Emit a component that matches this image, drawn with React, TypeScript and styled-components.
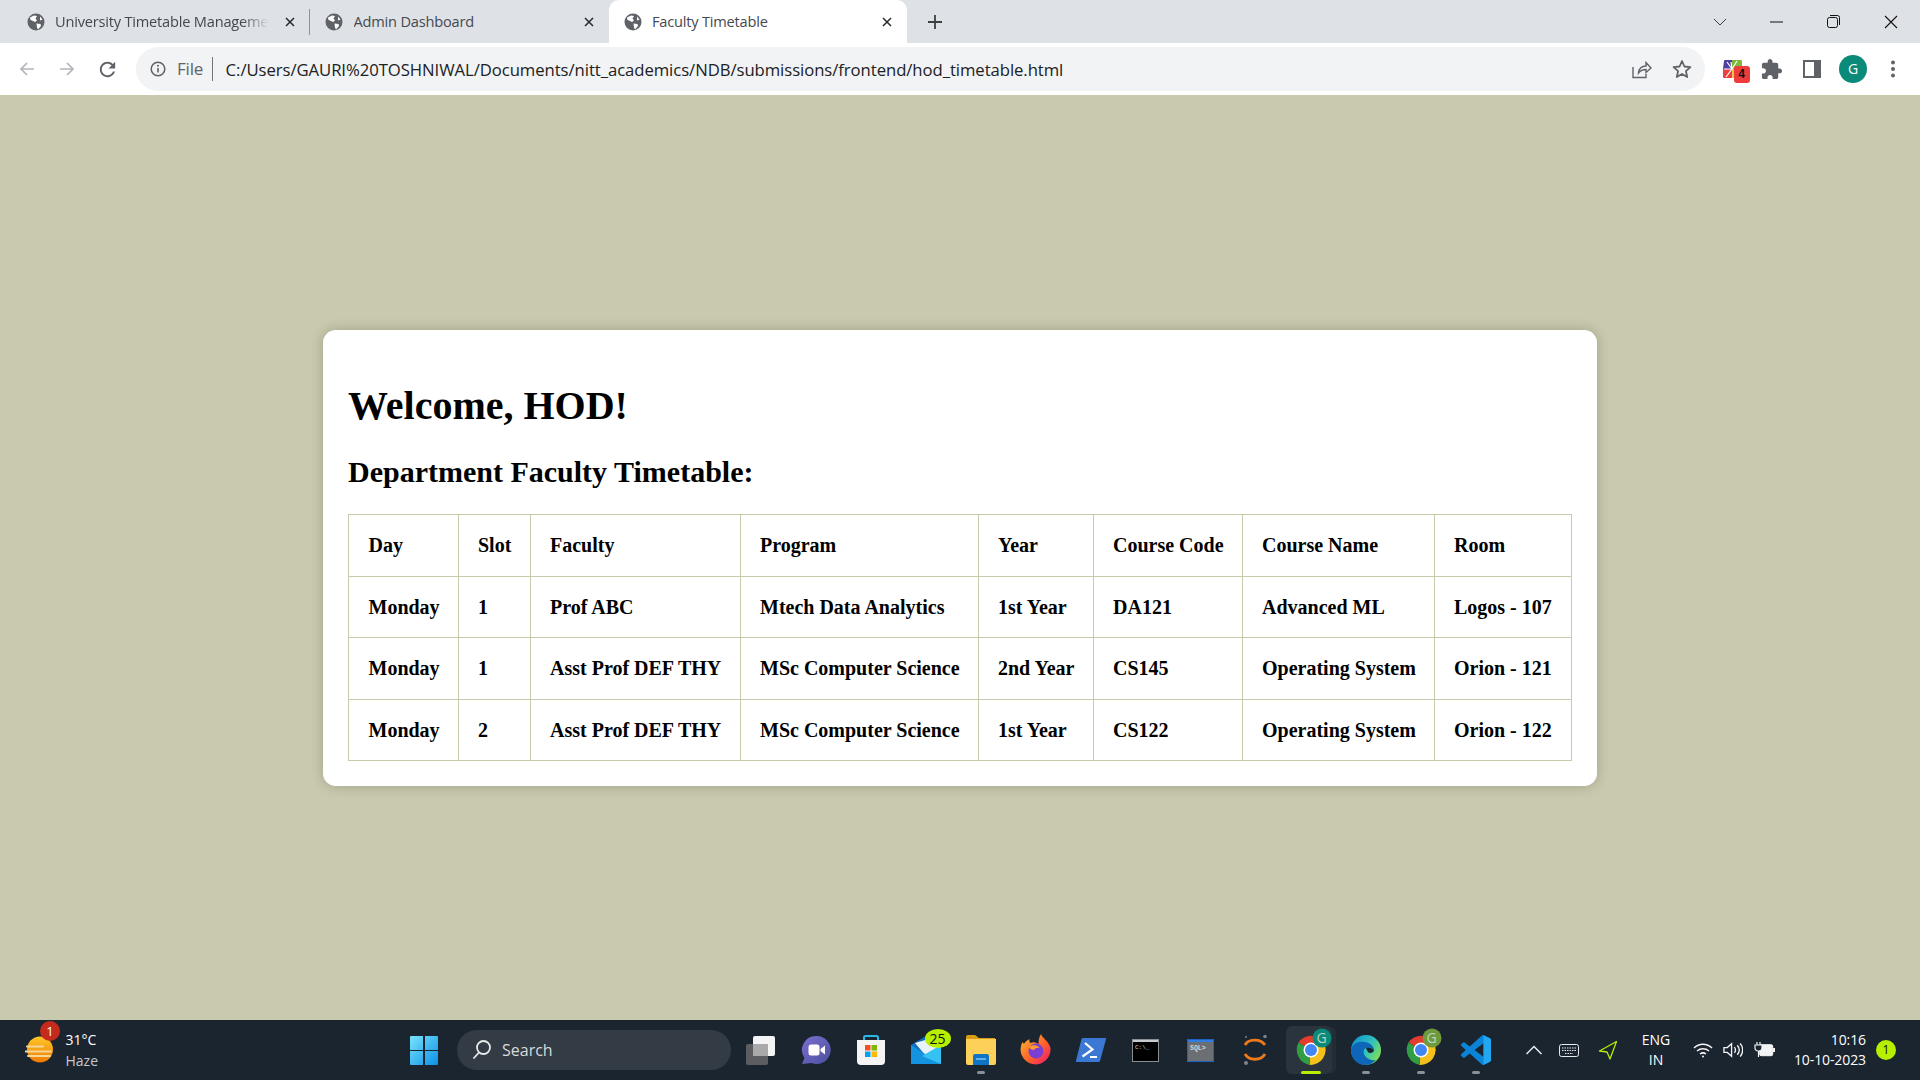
import React from "react";
import styled, { createGlobalStyle } from "styled-components";

const Global = createGlobalStyle`
  html, body { margin: 0; padding: 0; height: 100%; overflow: hidden; }
  #root { height: 100vh; }
`;

const Screen = styled.div`
  height: 1080px;
  width: 1920px;
  display: flex;
  flex-direction: column;
  background: #c9c9ae;
`;

/* ---------- browser chrome ---------- */
const TabStrip = styled.div`
  height: 43px;
  flex: none;
  display: flex;
  align-items: stretch;
  background: #dee1e6;
  padding-left: 11.5px;
  font-family: "Open Sans", "Noto Sans", sans-serif;
`;
const Tab = styled.div<{ $active?: boolean }>`
  width: 298.5px;
  flex: none;
  display: flex;
  align-items: center;
  padding: 0 11px 0 15px;
  box-sizing: border-box;
  position: relative;
  background: ${(p) => (p.$active ? "#fff" : "transparent")};
  border-radius: 10px 10px 0 0;
`;
const TabDivider = styled.div`
  position: absolute;
  right: 0;
  top: 9px;
  bottom: 8px;
  width: 1px;
  background: #8f9398;
`;
const TabTitle = styled.div<{ $fade?: boolean }>`
  margin-left: 10.5px;
  margin-top: -2px;
  flex: 1;
  min-width: 0;
  font-size: 14.6px;
  color: #45494e;
  white-space: nowrap;
  overflow: hidden;
  letter-spacing: -0.2px;
  ${(p) => p.$fade && `-webkit-mask-image: linear-gradient(90deg,#000 84%,transparent 96%);`}
`;
const TabClose = styled.div`
  width: 18px;
  height: 18px;
  margin-left: 3px;
  display: flex;
  align-items: center;
  justify-content: center;
  color: #26282b;
`;
const NewTab = styled.div`
  width: 28px;
  display: flex;
  align-items: center;
  justify-content: center;
  margin-left: 14px;
`;
const WindowControls = styled.div`
  margin-left: auto;
  display: flex;
  align-items: center;
`;
const WinCtl = styled.div<{ $w: number }>`
  width: ${(p) => p.$w}px;
  display: flex;
  justify-content: center;
`;

const Toolbar = styled.div`
  height: 52px;
  flex: none;
  display: flex;
  align-items: center;
  background: #fff;
  padding-left: 7px;
  box-sizing: border-box;
  font-family: "Open Sans", "Noto Sans", sans-serif;
`;
const ToolBtn = styled.div<{ $w?: number; $gap?: number }>`
  width: ${(p) => p.$w ?? 40}px;
  margin-left: ${(p) => p.$gap ?? 0}px;
  flex: none;
  display: flex;
  align-items: center;
  justify-content: center;
  position: relative;
`;
const Omnibox = styled.div`
  width: 1569px;
  height: 44px;
  margin-left: 9px;
  flex: none;
  display: flex;
  align-items: center;
  background: #f1f3f4;
  border-radius: 22px;
  padding-left: 14px;
  box-sizing: border-box;
`;
const FileLabel = styled.span`
  font-size: 17px;
  color: #5f6368;
  margin-left: 11px;
  padding-right: 9px;
  border-right: 1px solid #70757a;
  line-height: 24px;
  letter-spacing: -0.2px;
`;
const Url = styled.span`
  font-size: 16.7px;
  color: #202124;
  margin-left: 12.5px;
  letter-spacing: -0.06px;
  white-space: nowrap;
`;
const OmniActions = styled.div`
  margin-left: auto;
  display: flex;
  margin-right: 3px;
`;
const ExtBadge = styled.div`
  position: absolute;
  left: 21px;
  top: 7px;
  width: 16px;
  height: 17px;
  border-radius: 3px;
  background: #ee3b3b;
  color: #111;
  font: 700 12px/17px "Liberation Sans", sans-serif;
  text-align: center;
`;
const Avatar = styled.div`
  width: 28px;
  height: 28px;
  border-radius: 50%;
  background: #0a8a78;
  color: #fff;
  font-size: 14px;
  line-height: 28px;
  text-align: center;
`;

/* ---------- page ---------- */
const Page = styled.main`
  flex: 1;
  min-height: 0;
  padding-top: 1px;
  display: flex;
  align-items: center;
  justify-content: center;
  font-family: "Liberation Serif", "Times New Roman", serif;
  color: #000;
`;
const Card = styled.section`
  width: 1274px;
  box-sizing: border-box;
  background: #fff;
  padding: 25px;
  border-radius: 12.5px;
  box-shadow: 0 0 12.5px rgba(0, 0, 0, 0.2);
`;
const Heading = styled.h1`
  font-size: 40px;
  line-height: 46px;
  margin: 28.5px 0 26px;
  font-weight: 700;
`;
const SubHeading = styled.h2`
  font-size: 30px;
  line-height: 34px;
  margin: 26px 0 25px;
  font-weight: 700;
`;
const Table = styled.table`
  width: 1223px;
  border-collapse: collapse;
  table-layout: fixed;
`;
const Col = styled.col<{ $w: number }>`
  width: ${(p) => p.$w}px;
`;
const Cell = styled.td`
  border: 1px solid #c9c9ae;
  padding: 18.75px 0 18.75px 19.5px;
  font-size: 20px;
  line-height: 23px;
  font-weight: 700;
  text-align: left;
  white-space: nowrap;
`;

/* ---------- taskbar ---------- */
const Taskbar = styled.footer`
  height: 60px;
  flex: none;
  display: flex;
  align-items: center;
  background: #1b2530;
  color: #fff;
  font-family: "Open Sans", "Noto Sans", sans-serif;
`;
const Weather = styled.div`
  width: 405px;
  flex: none;
  box-sizing: border-box;
  padding-left: 25px;
  display: flex;
  align-items: center;
  position: relative;
`;
const WeatherText = styled.div`
  margin-left: 10.5px;
  font-size: 14px;
  line-height: 21px;
`;
const WeatherHaze = styled.div`
  color: #c5c9cc;
`;
const WeatherBadge = styled.div`
  position: absolute;
  left: 40px;
  top: -8px;
  width: 20px;
  height: 20px;
  border-radius: 50%;
  background: #c42b1c;
  font-size: 13px;
  line-height: 20px;
  text-align: center;
`;
const Start = styled.div`
  width: 38px;
  flex: none;
  display: flex;
  justify-content: center;
`;
const Search = styled.div`
  width: 274px;
  height: 40px;
  margin-left: 14px;
  margin-right: 2px;
  flex: none;
  box-sizing: border-box;
  padding-left: 14px;
  display: flex;
  align-items: center;
  background: #333b44;
  border-radius: 20px;
  font-size: 16px;
  color: #d8dadc;
`;
const SearchLabel = styled.span`
  margin-left: 9px;
`;
const Slot = styled.div<{ $active?: boolean }>`
  width: 55px;
  height: 50px;
  flex: none;
  display: flex;
  align-items: center;
  justify-content: center;
  position: relative;
  ${(p) =>
    p.$active &&
    `&::before{content:"";position:absolute;left:3px;right:6px;top:1px;bottom:1px;border-radius:6px;background:#2b333c;box-shadow:5px 0 0 -1px #242c35;}`}
  & > * { position: relative; }
`;
const Indicator = styled.div<{ $active?: boolean }>`
  position: absolute !important;
  bottom: 1px;
  left: 50%;
  width: ${(p) => (p.$active ? 20 : 8)}px;
  height: 3.5px;
  margin-left: ${(p) => (p.$active ? -10 : -4)}px;
  border-radius: 2px;
  background: ${(p) => (p.$active ? "#b6ef00" : "#8b9096")};
`;
const CountBadge = styled.div`
  position: absolute !important;
  left: 26.5px;
  top: 4px;
  width: 26px;
  height: 19px;
  border-radius: 50%;
  background: #b6ef00;
  color: #111;
  font-size: 14px;
  line-height: 19px;
  text-align: center;
`;
const Tray = styled.div`
  margin-left: 13px;
  display: flex;
  align-items: center;
  height: 100%;
`;
const TrayItem = styled.div<{ $w: number }>`
  width: ${(p) => p.$w}px;
  flex: none;
  display: flex;
  justify-content: center;
`;
const Lang = styled.div`
  width: 54px;
  flex: none;
  text-align: center;
  font-size: 14px;
  line-height: 20px;
`;
const Clock = styled.div`
  width: 81px;
  flex: none;
  text-align: right;
  font-size: 14px;
  line-height: 20px;
  white-space: nowrap;
  letter-spacing: -0.1px;
`;
const NotifBadge = styled.div`
  width: 20px;
  height: 20px;
  margin-left: 10px;
  flex: none;
  border-radius: 50%;
  background: #b6ef00;
  color: #111;
  font-size: 12px;
  line-height: 20px;
  text-align: center;
`;
const BadgeLetter = styled.div`
  position: absolute !important;
  left: 29px;
  top: 3px;
  width: 19px;
  text-align: center;
  font-size: 14px;
  line-height: 20px;
  color: #b9d6c5;
`;

/* ---------- icons ---------- */
const Globe = () => (
  <svg width="18" height="18" viewBox="0 0 18 18">
    <circle cx="9" cy="9" r="8.5" fill="#5f6368" />
    <path d="M3 4.5 7 2.5l3 .5-1.5 2.5L10 7.5 8 9 5 7.5 3.5 7zM9.5 10.5l4 .5.5 2-3 3.5-1-2zM13 3.5l2.5 3-2.5 1z" fill="#fff" />
  </svg>
);
const CloseX = ({ c = "#26282b" }: { c?: string }) => (
  <svg width="12" height="12" viewBox="0 0 12 12">
    <path d="M2 2l8 8M10 2l-8 8" stroke={c} strokeWidth="1.5" />
  </svg>
);
const Plus = () => (
  <svg width="16" height="16" viewBox="0 0 16 16">
    <path d="M8 1v14M1 8h14" stroke="#3c4043" strokeWidth="1.8" />
  </svg>
);
const ArrowSvg = styled.svg<{ $flip?: boolean }>`
  transform: ${(p) => (p.$flip ? "scaleX(-1)" : "none")};
`;
const Arrow = ({ flip }: { flip?: boolean }) => (
  <ArrowSvg $flip={flip} width="18" height="18" viewBox="0 0 18 18">
    <path d="M16 9H3M9 3 3 9l6 6" fill="none" stroke="#b2b5b9" strokeWidth="1.7" />
  </ArrowSvg>
);
const Reload = () => (
  <svg width="23" height="23" viewBox="0 0 24 24">
    <path fill="#5f6368" d="M17.65 6.35C16.2 4.9 14.21 4 12 4c-4.42 0-7.99 3.58-7.99 8s3.57 8 7.99 8c3.73 0 6.84-2.55 7.73-6h-2.08c-.82 2.33-3.04 4-5.65 4-3.31 0-6-2.69-6-6s2.69-6 6-6c1.66 0 3.14.69 4.22 1.78L13 11h7V4l-2.35 2.35z" />
  </svg>
);
const Info = () => (
  <svg width="16" height="16" viewBox="0 0 16 16">
    <circle cx="8" cy="8" r="6.8" fill="none" stroke="#5f6368" strokeWidth="1.5" />
    <path d="M8 7v4.6" stroke="#5f6368" strokeWidth="1.6" />
    <circle cx="8" cy="4.8" r="1" fill="#5f6368" />
  </svg>
);
const Share = () => (
  <svg width="20" height="20" viewBox="0 0 20 20" fill="none" stroke="#5f6368" strokeWidth="1.4">
    <path d="M1 8v10.5h13V15" />
    <path d="M6.5 14c.5-4.5 3.5-7 7.5-7V3.5l5 5.500-5 4.500V10.500c-3 0-5.500 1-7.500 3.500z" />
  </svg>
);
const Star = () => (
  <svg width="20" height="20" viewBox="0 0 20 20">
    <path d="M10 2l2.4 5.500 6 .6-4.500 4 1.300 5.900L10 15l-5.200 3 1.300-5.900-4.500-4 6-.6z" fill="none" stroke="#5f6368" strokeWidth="1.8" strokeLinejoin="round" />
  </svg>
);
const ExtIcon = () => (
  <svg width="20" height="20" viewBox="0 0 20 20">
    <path d="M1 2a1 1 0 0 1 1-1h7v9H0z" fill="#4f3f9e" />
    <path d="M9 1h9a1 1 0 0 1 1 1v8H9z" fill="#7cb83c" />
    <path d="M0 10h9v9H1a1 1 0 0 1-1-1z" fill="#ee4040" />
    <path d="M9 10h10v8a1 1 0 0 1-1 1H9z" fill="#f4c150" />
    <path d="M9 10l5-8M9 10 3 18M9 10 4 3M9 10l-1-7M9 10H1" stroke="#fff" strokeWidth="1.2" />
  </svg>
);
const Puzzle = () => (
  <svg width="23" height="23" viewBox="0 0 24 24">
    <path fill="#5f6368" d="M20.5 11H19V7c0-1.1-.9-2-2-2h-4V3.5C13 2.12 11.88 1 10.5 1S8 2.12 8 3.5V5H4c-1.1 0-1.99.9-1.99 2v3.8H3.5c1.49 0 2.7 1.21 2.7 2.7s-1.21 2.7-2.7 2.7H2V20c0 1.1.9 2 2 2h3.8v-1.5c0-1.49 1.21-2.7 2.7-2.7 1.49 0 2.7 1.21 2.7 2.7V22H17c1.1 0 2-.9 2-2v-4h1.5c1.38 0 2.5-1.12 2.5-2.5S21.88 11 20.5 11z" />
  </svg>
);
const SidePanel = () => (
  <svg width="18" height="18" viewBox="0 0 18 18">
    <path d="M0 0h18v18H0z" fill="#5f6368" />
    <path d="M2 2h9v14H2z" fill="#fff" />
  </svg>
);
const Dots = () => (
  <svg width="6" height="18" viewBox="0 0 6 18">
    <circle cx="3" cy="2.5" r="2" fill="#5f6368" />
    <circle cx="3" cy="9" r="2" fill="#5f6368" />
    <circle cx="3" cy="15.5" r="2" fill="#5f6368" />
  </svg>
);
const WeatherSun = () => (
  <svg width="30" height="32" viewBox="0 0 30 32">
    <defs>
      <linearGradient id="sun" x1="0" y1="0" x2="0" y2="1">
        <stop offset="0" stopColor="#ffc726" />
        <stop offset="1" stopColor="#ee7a06" />
      </linearGradient>
    </defs>
    <circle cx="15" cy="15.5" r="13" fill="url(#sun)" />
    <path d="M2 12.5h16M0 17.5h26M3 22h22" stroke="#f6d79a" strokeWidth="2" strokeLinecap="round" />
  </svg>
);
const WinLogo = () => (
  <svg width="28" height="29" viewBox="0 0 28 29">
    <defs>
      <linearGradient id="win" x1="0" y1="0" x2="1" y2="1">
        <stop offset="0" stopColor="#79e4fb" />
        <stop offset="1" stopColor="#0b8fe6" />
      </linearGradient>
    </defs>
    <path d="M0 1a1 1 0 0 1 1-1h12v14H0zM15 0h12a1 1 0 0 1 1 1v13H15zM0 15h13v14H1a1 1 0 0 1-1-1zM15 15h13v13a1 1 0 0 1-1 1H15z" fill="url(#win)" />
  </svg>
);
const SearchGlass = () => (
  <svg width="22" height="22" viewBox="0 0 22 22" fill="none" stroke="#e8eaec" strokeWidth="1.8">
    <circle cx="12.5" cy="8.5" r="6.5" />
    <path d="M8 13.5 2.5 19.5" />
  </svg>
);
const TaskView = () => (
  <svg width="32" height="32" viewBox="0 0 32 32">
    <rect x="1" y="10" width="22" height="21" rx="2" fill="#5b5d60" />
    <rect x="8" y="2" width="22" height="20" rx="2" fill="#f4f4f4" />
    <rect x="8" y="10" width="15" height="12" fill="#a9a9a9" />
  </svg>
);
const ChatIcon = () => (
  <svg width="30" height="30" viewBox="0 0 30 30">
    <defs>
      <linearGradient id="chat" x1="0" y1="0" x2="1" y2="1">
        <stop offset="0" stopColor="#7b6fd0" />
        <stop offset="1" stopColor="#4c4f9e" />
      </linearGradient>
    </defs>
    <path d="M15.5 1a14 14 0 1 1-5 27L1 29l2.5-6A14 14 0 0 1 15.5 1z" fill="url(#chat)" />
    <rect x="7.5" y="9.5" width="11" height="11" rx="2.5" fill="#fff" />
    <path d="M19.5 14 24 10.5v9L19.5 16z" fill="#fff" />
  </svg>
);
const StoreIcon = () => (
  <svg width="30" height="32" viewBox="0 0 30 32">
    <path d="M8 7V3.5a1.5 1.5 0 0 1 1.5-1.5h11A1.5 1.5 0 0 1 22 3.5V7" fill="none" stroke="#29b6e8" strokeWidth="2" />
    <path d="M1 6h28v21a4 4 0 0 1-4 4H5a4 4 0 0 1-4-4z" fill="#f4f4f4" />
    <path d="M9 11h5.5v5.5H9z" fill="#f25022" />
    <path d="M15.5 11H21v5.5h-5.5z" fill="#7fba00" />
    <path d="M9 17.5h5.5V23H9z" fill="#00a4ef" />
    <path d="M15.5 17.5H21V23h-5.5z" fill="#ffb900" />
  </svg>
);
const MailIcon = () => (
  <svg width="32" height="30" viewBox="0 0 32 30">
    <path d="M1 10 16 1l15 9v19H1z" fill="#0e6fc0" />
    <path d="M5 8 22 3l7 10-13 8z" fill="#e8f2fa" />
    <path d="M1 10v19h30z" fill="#1393e0" />
    <path d="M31 10 12 21l19 8z" fill="#35c1f1" />
  </svg>
);
const FilesIcon = () => (
  <svg width="32" height="30" viewBox="0 0 32 30">
    <path d="M1 2a2 2 0 0 1 2-2h7l4 3h16v5H1z" fill="#d99d13" />
    <path d="M1 4h30v24a2 2 0 0 1-2 2H3a2 2 0 0 1-2-2z" fill="#fdd05a" />
    <path d="M8 21a2 2 0 0 1 2-2h12a2 2 0 0 1 2 2v9H8z" fill="#0f74c6" />
    <path d="M11 24h10" stroke="#7fc4f0" strokeWidth="1.5" />
  </svg>
);
const FirefoxIcon = () => (
  <svg width="32" height="32" viewBox="0 0 32 32">
    <defs>
      <linearGradient id="ff" x1="0" y1="0" x2="1" y2="1">
        <stop offset="0" stopColor="#ffbd2e" />
        <stop offset="0.6" stopColor="#ff5a2c" />
        <stop offset="1" stopColor="#e3127a" />
      </linearGradient>
    </defs>
    <path d="M21 0c1 4 8 7 9.5 14A15 15 0 1 1 2.5 8L4 10c1-2 3-4 5.5-5-.5 2 0 3 1 4 2-1 5-1 8 1 0-4 .5-7 2.5-10z" fill="url(#ff)" />
    <circle cx="16" cy="17" r="7.5" fill="#7b3fd3" />
    <path d="M9 13c4-3 9-2 11 1-3-.5-5 .5-6 2-2 0-4-1-5-3z" fill="#ff9a2c" />
  </svg>
);
const PowerShellIcon = () => (
  <svg width="30" height="24" viewBox="0 0 30 24">
    <path d="M7 0h22a1 1 0 0 1 1 1.3L24 23a1.5 1.5 0 0 1-1.400 1H1a1 1 0 0 1-1-1.3L5.500 1A1.500 1.500 0 0 1 7 0z" fill="#3a78d4" />
    <path d="M9 5l7.500 6.500L6.500 18.500" fill="none" stroke="#fff" strokeWidth="2.2" />
    <path d="M14 19h7" stroke="#fff" strokeWidth="2" />
  </svg>
);
const CmdIcon = () => (
  <svg width="27" height="23" viewBox="0 0 27 23">
    <rect x="0.5" y="0.5" width="26" height="22" fill="#000" stroke="#8b8f93" />
    <rect x="1" y="1" width="25" height="2" fill="#c7cbd0" />
    <text x="3" y="9.5" fill="#d0d0d0" fontSize="6" fontFamily="Liberation Mono">C:\_</text>
  </svg>
);
const SqlIcon = () => (
  <svg width="27" height="23" viewBox="0 0 27 23">
    <rect x="0.5" y="0.5" width="26" height="22" fill="#6b6e72" stroke="#1f62c4" />
    <rect x="1" y="1" width="25" height="2" fill="#2f7de0" />
    <text x="3" y="11" fill="#d8d8d8" fontSize="6.5" fontFamily="Liberation Mono" fontWeight="700">SQL&gt;</text>
  </svg>
);
const EclipseLike = () => (
  <svg width="30" height="32" viewBox="0 0 30 32">
    <path d="M4 11c3-6 15-7 20 0" fill="none" stroke="#ef7a1a" strokeWidth="2.8" />
    <path d="M4 20c4 7 16 7 20 0" fill="none" stroke="#ef7a1a" strokeWidth="2.8" />
    <circle cx="24" cy="2.5" r="1.8" fill="#7d8287" />
    <circle cx="5" cy="29" r="2" fill="#7d8287" />
    <circle cx="5" cy="3" r="1" fill="#7d8287" />
  </svg>
);
const ChromeSvg = styled.svg`
  overflow: visible;
`;
const ChromeIcon = ({ badge, id }: { badge: string; id: string }) => (
  <ChromeSvg width="38" height="38" viewBox="0 0 38 38" aria-label={id}>
    <g transform="translate(3.5 3.5)">
      <path d="M15 15 3 8A15.5 15.5 0 0 1 28.5 8z" fill="#e33b2e" />
      <path d="M15 15 28.5 8A15.5 15.5 0 0 1 14 30.5z" fill="#f6c01c" />
      <path d="M15 15 14 30.5A15.5 15.5 0 0 1 3 8z" fill="#2f9e44" />
      <circle cx="15.5" cy="15.5" r="7.5" fill="#fff" />
      <circle cx="15.5" cy="15.5" r="6" fill="#4285f4" />
    </g>
    <circle cx="30" cy="7" r="9.5" fill={badge} />
  </ChromeSvg>
);
const EdgeIcon = () => (
  <svg width="30" height="30" viewBox="0 0 30 30">
    <defs>
      <linearGradient id="edge" x1="0" y1="0" x2="1" y2="0.6">
        <stop offset="0" stopColor="#0c8fd0" />
        <stop offset="0.6" stopColor="#2ebfc0" />
        <stop offset="1" stopColor="#7adf5c" />
      </linearGradient>
    </defs>
    <circle cx="15" cy="15" r="15" fill="url(#edge)" />
    <path d="M0 15C1 8 8 6 14 7c6 1 9 5 9 8-2-2-5-3-8-2-3 1-3 5-1 8 2 3 7 5 11 4-3 3-7 5-11 5C6 30 0 23 0 15z" fill="#0d66b8" />
    <path d="M15 13c3-1 6 0 8 2 0 2-2 3-4 3s-3-3-4-5z" fill="#1b2530" />
  </svg>
);
const VsCode = () => (
  <svg width="30" height="30" viewBox="0 0 24 24">
    <path fill="#0a84d6" d="M23.15 2.587L18.21.21a1.494 1.494 0 0 0-1.705.29l-9.46 8.63-4.12-3.128a.999.999 0 0 0-1.276.057L.327 7.261A1 1 0 0 0 .326 8.74L3.899 12 .326 15.26a1 1 0 0 0 .001 1.479L1.65 17.94a.999.999 0 0 0 1.276.057l4.12-3.128 9.46 8.63a1.492 1.492 0 0 0 1.704.29l4.942-2.377A1.5 1.5 0 0 0 24 20.06V3.939a1.5 1.5 0 0 0-.85-1.352zm-5.146 14.861L10.826 12l7.178-5.448v10.896z" />
    <path fill="#22a7f2" d="M18 .1l5.15 2.487A1.5 1.5 0 0 1 24 3.939V20.06a1.5 1.5 0 0 1-.85 1.352L18 23.9z" />
  </svg>
);
const Caret = () => (
  <svg width="18" height="10" viewBox="0 0 18 10"><path d="M1.5 9 9 1.5 16.5 9" fill="none" stroke="#e8eaec" strokeWidth="1.5" /></svg>
);
const Keyboard = () => (
  <svg width="20" height="13" viewBox="0 0 20 13" fill="none" stroke="#e8eaec">
    <rect x="0.5" y="0.5" width="19" height="12" rx="2" />
    <path d="M3 4h14M3 6.5h14M6 9.5h8" strokeDasharray="1.5 1" />
  </svg>
);
const Locate = () => (
  <svg width="20" height="20" viewBox="0 0 20 20"><path d="M18.5 1.5 1.5 11l7.5 1 3 7z" fill="none" stroke="#b6ef00" strokeWidth="1.3" strokeLinejoin="round" /></svg>
);
const Wifi = () => (
  <svg width="20" height="16" viewBox="0 0 20 16" fill="none" stroke="#f2f3f4" strokeWidth="1.5">
    <path d="M1 6c5-5 13-5 18 0M4 9c3.5-3 8.5-3 12 0M7 12c2-1.5 4-1.5 6 0" />
    <circle cx="10" cy="14.5" r="1" fill="#f2f3f4" stroke="none" />
  </svg>
);
const Volume = () => (
  <svg width="21" height="18" viewBox="0 0 21 18" fill="none" stroke="#f2f3f4" strokeWidth="1.4">
    <path d="M1 6.5h3.5L9 2.5v13l-4.5-4H1z" />
    <path d="M12 6c1.5 2 1.5 4 0 6M15 4c2.500 3 2.500 7 0 10M18 2c3.500 4 3.500 10 0 14" />
  </svg>
);
const Battery = () => (
  <svg width="21" height="16" viewBox="0 0 21 16">
    <rect x="5.7" y="2.7" width="13" height="11" rx="1.5" fill="#f2f3f4" stroke="#f2f3f4" />
    <path d="M19 6h2v4h-2z" fill="#f2f3f4" />
    <path d="M3 0v3M6 0v3M1 3h7v3a3 3 0 0 1-3 3H4a3 3 0 0 1-3-3zM4.5 9v6" stroke="#f2f3f4" strokeWidth="1.2" fill="#1b2530" />
  </svg>
);

/* ---------- data ---------- */
const columns = [109.5, 72, 210, 238, 115, 149, 192, 137.5];
const rows = [
  ["Day", "Slot", "Faculty", "Program", "Year", "Course Code", "Course Name", "Room"],
  ["Monday", "1", "Prof ABC", "Mtech Data Analytics", "1st Year", "DA121", "Advanced ML", "Logos - 107"],
  ["Monday", "1", "Asst Prof DEF THY", "MSc Computer Science", "2nd Year", "CS145", "Operating System", "Orion - 121"],
  ["Monday", "2", "Asst Prof DEF THY", "MSc Computer Science", "1st Year", "CS122", "Operating System", "Orion - 122"],
];

export default function App() {
  return (
    <Screen>
      <Global />
      <TabStrip>
        <Tab>
          <Globe />
          <TabTitle $fade>University Timetable Management</TabTitle>
          <TabClose><CloseX /></TabClose>
          <TabDivider />
        </Tab>
        <Tab>
          <Globe />
          <TabTitle>Admin Dashboard</TabTitle>
          <TabClose><CloseX /></TabClose>
        </Tab>
        <Tab $active>
          <Globe />
          <TabTitle>Faculty Timetable</TabTitle>
          <TabClose><CloseX /></TabClose>
        </Tab>
        <NewTab><Plus /></NewTab>
        <WindowControls>
          <WinCtl $w={56}>
            <svg width="14" height="8" viewBox="0 0 14 8"><path d="M1 1l6 6 6-6" fill="none" stroke="#3c4043" /></svg>
          </WinCtl>
          <WinCtl $w={57}>
            <svg width="13" height="2" viewBox="0 0 13 2"><path d="M0 1h13" stroke="#111" strokeWidth="1" /></svg>
          </WinCtl>
          <WinCtl $w={57}>
            <svg width="13" height="13" viewBox="0 0 13 13" fill="none" stroke="#111"><rect x="0.5" y="2.5" width="10" height="10" rx="2" /><path d="M3 0.5h7.5a2 2 0 0 1 2 2V10" /></svg>
          </WinCtl>
          <WinCtl $w={58}>
            <svg width="14" height="14" viewBox="0 0 14 14"><path d="M1 1l12 12M13 1 1 13" stroke="#111" strokeWidth="1.1" /></svg>
          </WinCtl>
        </WindowControls>
      </TabStrip>

      <Toolbar>
        <ToolBtn><Arrow /></ToolBtn>
        <ToolBtn><Arrow flip /></ToolBtn>
        <ToolBtn><Reload /></ToolBtn>
        <Omnibox>
          <Info />
          <FileLabel>File</FileLabel>
          <Url>C:/Users/GAURI%20TOSHNIWAL/Documents/nitt_academics/NDB/submissions/frontend/hod_timetable.html</Url>
          <OmniActions>
            <ToolBtn $w={40}><Share /></ToolBtn>
            <ToolBtn $w={40}><Star /></ToolBtn>
          </OmniActions>
        </Omnibox>
        <ToolBtn $w={40} $gap={7.5}><ExtIcon /><ExtBadge>4</ExtBadge></ToolBtn>
        <ToolBtn $w={38.5}><Puzzle /></ToolBtn>
        <ToolBtn $w={41.5}><SidePanel /></ToolBtn>
        <ToolBtn $w={41}><Avatar>G</Avatar></ToolBtn>
        <ToolBtn $w={38}><Dots /></ToolBtn>
      </Toolbar>

      <Page>
        <Card>
          <Heading>Welcome, HOD!</Heading>
          <SubHeading>Department Faculty Timetable:</SubHeading>
          <Table>
            <colgroup>
              {columns.map((w, i) => <Col key={i} $w={w} />)}
            </colgroup>
            <tbody>
              {rows.map((r, i) => (
                <tr key={i}>
                  {r.map((c, j) => <Cell as={i === 0 ? "th" : "td"} key={j}>{c}</Cell>)}
                </tr>
              ))}
            </tbody>
          </Table>
        </Card>
      </Page>

      <Taskbar>
        <Weather>
          <WeatherSun />
          <WeatherBadge>1</WeatherBadge>
          <WeatherText>
            <div>31°C</div>
            <WeatherHaze>Haze</WeatherHaze>
          </WeatherText>
        </Weather>
        <Start><WinLogo /></Start>
        <Search><SearchGlass /><SearchLabel>Search</SearchLabel></Search>
        <Slot><TaskView /></Slot>
        <Slot><ChatIcon /></Slot>
        <Slot><StoreIcon /></Slot>
        <Slot><MailIcon /><CountBadge>25</CountBadge></Slot>
        <Slot><FilesIcon /><Indicator /></Slot>
        <Slot><FirefoxIcon /></Slot>
        <Slot><PowerShellIcon /></Slot>
        <Slot><CmdIcon /></Slot>
        <Slot><SqlIcon /></Slot>
        <Slot><EclipseLike /></Slot>
        <Slot $active><ChromeIcon badge="#0a8a78" id="chrome" /><BadgeLetter>G</BadgeLetter><Indicator $active /></Slot>
        <Slot><EdgeIcon /><Indicator /></Slot>
        <Slot><ChromeIcon badge="#6f9a3c" id="chrome profile" /><BadgeLetter>G</BadgeLetter><Indicator /></Slot>
        <Slot><VsCode /><Indicator /></Slot>
        <Tray>
          <TrayItem $w={35}><Caret /></TrayItem>
          <TrayItem $w={36}><Keyboard /></TrayItem>
          <TrayItem $w={42}><Locate /></TrayItem>
          <Lang>ENG<br />IN</Lang>
          <TrayItem $w={40}><Wifi /></TrayItem>
          <TrayItem $w={20}><Volume /></TrayItem>
          <TrayItem $w={42}><Battery /></TrayItem>
          <Clock>10:16<br />10-10-2023</Clock>
          <NotifBadge>1</NotifBadge>
        </Tray>
      </Taskbar>
    </Screen>
  );
}
